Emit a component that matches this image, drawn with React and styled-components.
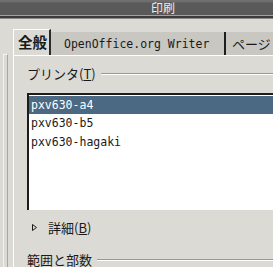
import React from "react";
import styled, { createGlobalStyle } from "styled-components";

const Global = createGlobalStyle`
  html, body { margin: 0; padding: 0; overflow: hidden; background: #dcdad5; }
  body { width: 273px; height: 267px; }
`;

const Win = styled.div`
  width: 326px;
  height: 267px;
  display: flex;
  flex-direction: column;
  background: #dcdad5;
  font-family: "Noto Sans CJK JP", "DejaVu Sans", sans-serif;
  color: #1a1a1a;
`;

const TitleBar = styled.div`
  height: 15px;
  flex: none;
  display: flex;
  align-items: center;
  justify-content: center;
  background: linear-gradient(#727272 0px, #6a6a6a 2px, #5a5a5a 3px, #585858 100%);
  color: #ececec;
  font-size: 12px;
  line-height: 15px;
  border-bottom: 1px solid #a2a2a2;
  box-shadow: 0 2px 0 #3c3c3c, 0 3px 0 #8a8a88;
`;

const Body = styled.div`
  flex: 1;
  display: flex;
  padding-top: 13px;
  min-height: 0;
`;

const Gutter = styled.div`
  width: 13px;
  flex: none;
  display: flex;
  padding-top: 25px;
`;

const OuterFrame = styled.div`
  margin-left: 3px;
  width: 3px;
  border-left: 1px solid #f2f1ee;
  border-right: 1px solid #a9a7a1;
  border-top: 1px solid #f7f6f3;
`;

const Notebook = styled.div`
  flex: 1;
  display: flex;
  flex-direction: column;
`;

const TabRow = styled.div`
  display: flex;
  align-items: flex-end;
  height: 26px;
`;

const Tab = styled.div`
  box-sizing: border-box;
  height: ${(p) => (p.$active ? "26px" : "23px")};
  padding: ${(p) => (p.$active ? "0 4px 2px 4px" : "0 0 0 13px")};
  width: ${(p) => p.$w};
  display: flex;
  align-items: center;
  background: ${(p) => (p.$active ? "#dcdad5" : "#c9c7c1")};
  border-left: ${(p) => (p.$active ? "1px solid #ffffff" : "none")};
  border-top: ${(p) => (p.$active ? "1px solid #ffffff" : "none")};
  border-right: 2px solid ${(p) => (p.$active ? "#2a2a2a" : "#c9c7c1")};
  font-family: ${(p) =>
    p.$mono ? '"DejaVu Sans Mono", monospace' : '"Noto Sans CJK JP", sans-serif'};
  font-size: ${(p) => (p.$active ? "14.5px" : p.$mono ? "11.5px" : "13px")};
  font-weight: ${(p) => (p.$active ? 700 : 400)};
  color: #1a1a1a;
  white-space: nowrap;
  overflow: hidden;
`;

const Sep = styled.div`
  width: 2px;
  height: 23px;
  background: #1e1e1e;
  flex: none;
`;

const Panel = styled.div`
  flex: 1;
  border-left: 1px solid #ffffff;
  border-top: 1px solid #ffffff;
  padding: 9px 0 0 13px;
  display: flex;
  flex-direction: column;
`;

const FrameHead = styled.div`
  display: flex;
  align-items: center;
  gap: 5px;
  height: 16px;
  font-size: 13px;
  white-space: nowrap;
  &::after {
    content: "";
    flex: 1;
    height: 1px;
    margin-top: 1px;
    background: #9a9893;
    box-shadow: 0 1px 0 #ffffff;
  }
`;

const List = styled.div`
  margin-top: 12px;
  height: 115px;
  background: #ffffff;
  border-top: 2px solid #1c1c1c;
  border-left: 2px solid #1c1c1c;
  display: flex;
  flex-direction: column;
`;

const Row = styled.div`
  height: ${(p) => (p.$sel ? "18px" : "19px")};
  line-height: ${(p) => (p.$sel ? "18px" : "19px")};
  padding-left: 2px;
  font-family: "DejaVu Sans Mono", monospace;
  font-size: 11.5px;
  background: ${(p) => (p.$sel ? "#4b6983" : "transparent")};
  color: ${(p) => (p.$sel ? "#ffffff" : "#1a1a1a")};
  margin-top: ${(p) => (p.$sel ? "1px" : "0")};
`;

const Expander = styled.div`
  display: flex;
  align-items: center;
  height: 16px;
  margin-top: 9px;
  padding-left: 5px;
  gap: 11px;
  font-size: 13px;
`;

const Gap = styled.div`
  height: ${(p) => p.$h};
  flex: none;
`;

const Arrow = () => (
  <svg width="5" height="7" viewBox="0 0 5 7">
    <path d="M0.5 0.5 L4.5 3.5 L0.5 6.5 Z" fill="none" stroke="#1a1a1a" strokeWidth="1" />
  </svg>
);

export default function App() {
  return (
    <>
      <Global />
      <Win>
        <TitleBar>印刷</TitleBar>
        <Body>
          <Gutter>
            <OuterFrame />
          </Gutter>
          <Notebook>
            <TabRow>
              <Tab $active $w="38px">全般</Tab>
              <Tab $mono $w="173px">OpenOffice.org Writer</Tab>
              <Sep />
              <Tab $w="120px" style={{ paddingLeft: "6px" }}>ページ</Tab>
            </TabRow>
            <Panel>
              <FrameHead>
                <span>
                  プリンタ(<u>T</u>)
                </span>
              </FrameHead>
              <List>
                <Row $sel>pxv630-a4</Row>
                <Row>pxv630-b5</Row>
                <Row>pxv630-hagaki</Row>
              </List>
              <Expander>
                <Arrow />
                <span>
                  詳細(<u>B</u>)
                </span>
              </Expander>
              <Gap $h="16px" />
              <FrameHead>
                <span>範囲と部数</span>
              </FrameHead>
            </Panel>
          </Notebook>
        </Body>
      </Win>
    </>
  );
}
